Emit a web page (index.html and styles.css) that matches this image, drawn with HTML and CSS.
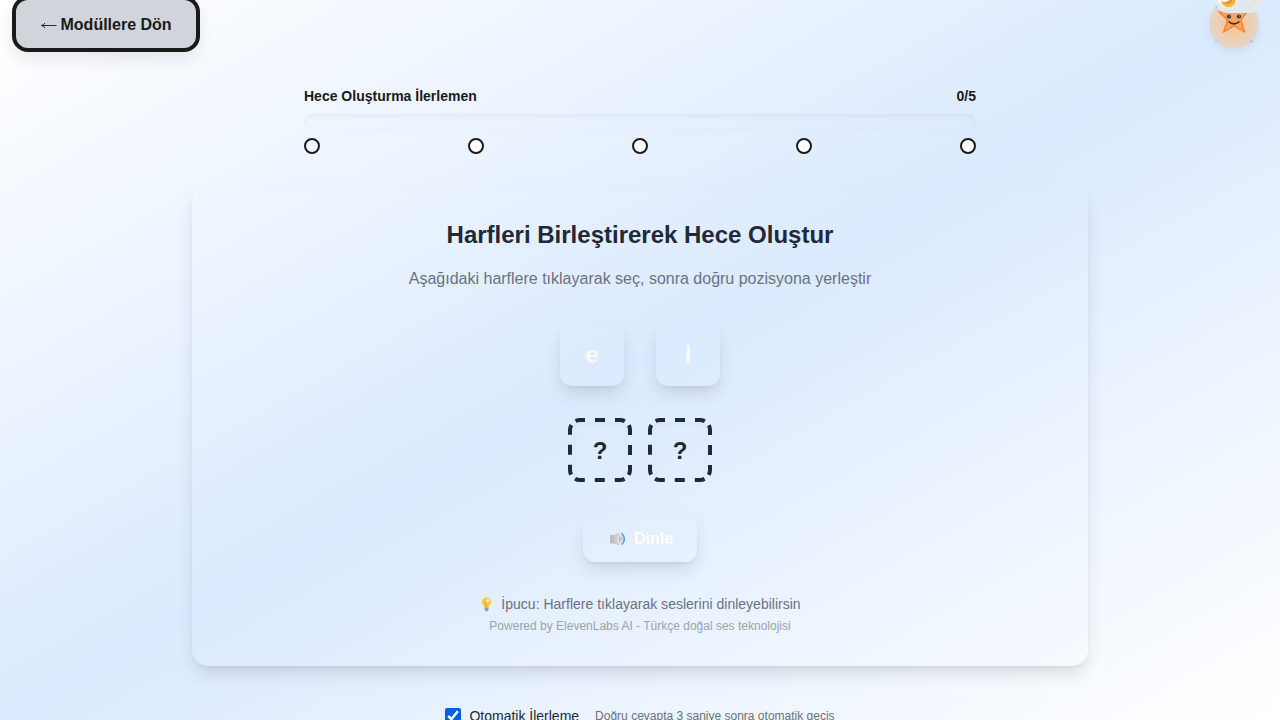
FILE: index.html
```html
<!DOCTYPE html>
<html lang="tr">
<head>
<meta charset="utf-8">
<title>Hece Oluşturma</title>
<link rel="stylesheet" href="styles.css">
</head>
<body>
<button class="back">
  <svg width="17" height="10" viewBox="0 0 17 10"><path d="M16.500 5.500H2M5 3Q4 5 1.500 5.500 4 6 5 8" fill="none" stroke="#1a1a1a" stroke-width=".9"/></svg>
  <span>Modüllere Dön</span>
</button>
<div class="mascot">
  <svg width="50" height="50" viewBox="0 0 50 50">
    <path d="M25 1l4 11.500 9 .5-6 8 3.500 12L25 27 14.500 33l4-12L10 13l11-.5z" fill="#ffa35c" stroke="#ff7a2c" stroke-width="1.200"/>
    <circle cx="20" cy="17.500" r="2.100" fill="#2c3440"/><circle cx="30" cy="17.500" r="2.100" fill="#2c3440"/>
    <circle cx="20.500" cy="16.900" r=".5" fill="#fff"/><circle cx="30.500" cy="16.900" r=".5" fill="#fff"/>
    <path d="M19.500 22.500q5.500 4.600 11 0" fill="none" stroke="#2c3440" stroke-width="1.600"/>
    <path d="M6 7.500h3M7.500 6v3M41 42.500h3M42.500 41v3" stroke="#77e6b4"/>
    <path d="M6 42.500h2M7 41.500v2" stroke="#8cd0f2"/>
  </svg>
</div>
<div class="toggle">
  <svg width="48" height="14" viewBox="0 0 48 14">
    <circle cx="13" cy="-2" r="10" fill="#fff"/>
    <path d="M19-5A7.500 7.500 0 1 1 6 1Q14 4 19-5z" fill="#f5b942"/>
    <path d="M17-3Q15 2 8 3 15 6.500 18 0z" fill="#e99232"/>
    <path d="M39-5A7.500 7.500 0 0 1 28 4Q38 10 42 0 42-4 39-5z" fill="#f2e0c4"/>
  </svg>
</div>
<main class="page">
  <section class="progress">
    <div class="progress-head"><span>Hece Oluşturma İlerlemen</span><span>0/5</span></div>
    <div class="track"></div>
    <div class="dots"><i class="dot first"></i><i class="dot"></i><i class="dot"></i><i class="dot"></i><i class="dot"></i></div>
  </section>
  <section class="card">
    <h2 class="title">Harfleri Birleştirerek Hece Oluştur</h2>
    <p class="lead">Aşağıdaki harflere tıklayarak seç, sonra doğru pozisyona yerleştir</p>
    <div class="letters"><button class="letter">e</button><button class="letter">l</button></div>
    <div class="slots">
      <div class="slot"><svg class="dashes" width="64" height="64" viewBox="0 0 64 64"><rect x="2" y="2" width="60" height="60" rx="10" fill="none" stroke="#1f2937" stroke-width="4" stroke-dasharray="10 10 10 10 10 5.708" stroke-dashoffset="5"/></svg><span class="mark">?</span></div>
      <div class="slot"><svg class="dashes" width="64" height="64" viewBox="0 0 64 64"><rect x="2" y="2" width="60" height="60" rx="10" fill="none" stroke="#1f2937" stroke-width="4" stroke-dasharray="10 10 10 10 10 5.708" stroke-dashoffset="5"/></svg><span class="mark">?</span></div>
    </div>
    <button class="listen">
      <svg class="speaker" width="18" height="16" viewBox="0 0 18 16">
        <path d="M1 4h5v8.500H1z" fill="#c0b8c2"/><path d="M4.500 4.200L10 1.500v13L4.500 12.300z" fill="#d0c8d0"/><ellipse cx="10" cy="8" rx="2" ry="6.600" fill="#ded7e0"/><ellipse cx="10.700" cy="8" rx=".8" ry="2.300" fill="#bcb2c0"/>
        <path d="M12.300 5.500q1.500 2.500 0 5" fill="none" stroke="#8cc6f7"/><path d="M12.600 2.200q5.500 5.800 0 11.600" fill="none" stroke="#459cf0" stroke-width="1.500"/>
      </svg>
      <span>Dinle</span>
    </button>
    <p class="hint">
      <svg width="14" height="15" viewBox="0 0 14 15">
        <path d="M7.500.5a4.800 4.800 0 0 1 4.800 4.600c0 2.400-2.500 3-2.800 5.400h-4C5.200 8.100 2.700 7.500 2.700 5.100A4.800 4.800 0 0 1 7.500.5z" fill="#fdc545"/>
        <circle cx="8.800" cy="3.500" r="1.700" fill="#fff2b0"/><path d="M6.500 5l1 5.500" stroke="#f39a3d"/>
        <path d="M5.500 10.500h4v2.300l-1 1.500h-2l-1-1.500z" fill="#a791ab"/>
      </svg>
      <span>İpucu: Harflere tıklayarak seslerini dinleyebilirsin</span>
    </p>
    <p class="powered">Powered by ElevenLabs AI - Türkçe doğal ses teknolojisi</p>
  </section>
  <label class="auto"><input class="check" type="checkbox" checked><span class="auto-name">Otomatik İlerleme</span><span class="auto-note">Doğru cevapta 3 saniye sonra otomatik geçiş</span></label>
</main>
</body>
</html>
```
FILE: styles.css
```css
* { box-sizing: border-box; margin: 0; padding: 0; }
body {
  height: 720px; overflow: hidden;
  font-family: "Liberation Sans", Arial, sans-serif; color: #1a1a1a;
  background: linear-gradient(to bottom right, #fff, #dbeafe, #fff);
}
button { font-family: inherit; border: 0; }
.back {
  position: absolute; left: 12px; top: -4px; width: 188px; height: 56px;
  display: flex; align-items: center; gap: 4px; padding: 2px 0 0 23.500px;
  border: 4px solid #1a1a1a; border-radius: 16px; background: #d1d5db; color: #1a1a1a;
  font-size: 16px; font-weight: 700; line-height: 24px;
  box-shadow: 0 8px 16px rgba(0,0,0,.08);
}
.mascot {
  position: absolute; left: 1209px; top: -1px; width: 50px; height: 50px; border-radius: 50%;
  background: radial-gradient(circle, #f9c591 0%, #efceb0 45%, #e0d6d0 70%);
  box-shadow: 0 3px 8px rgba(80,100,140,.1);
}
.toggle {
  position: absolute; left: 1215px; top: 0; width: 48px; height: 13px; overflow: hidden;
  border-radius: 0 0 14px 14px; background: #e3e8f0;
}
.mascot svg, .toggle svg { display: block; }
.page { display: flex; flex-direction: column; align-items: center; padding-top: 86px; }
.progress { width: 672px; }
.progress-head { display: flex; justify-content: space-between; font-size: 14px; font-weight: 700; line-height: 20px; }
.track { height: 16px; margin-top: 8px; border-radius: 8px; box-shadow: inset 0 2px 6px rgba(0,0,0,.06); }
.dots { display: flex; justify-content: space-between; margin-top: 8px; }
.dot { width: 16px; height: 16px; border: 2px solid #1a1a1a; border-radius: 50%; background: #fff; }
.first { background: transparent; }
.card {
  width: 896px; height: 480px; margin-top: 32px; padding: 33px 32px 31px;
  display: flex; flex-direction: column; align-items: center; border-radius: 16px;
  box-shadow: 0 10px 17px -1px rgba(0,0,0,.1), 0 4px 6px -4px rgba(0,0,0,.1);
}
.title { font-size: 24px; line-height: 32px; color: #1f2937; }
.lead { margin-top: 16px; font-size: 16px; line-height: 24px; color: #6b7280; }
.letters { display: flex; gap: 32px; margin-top: 31px; }
.letter {
  width: 64px; height: 64px; padding-top: 2px; border-radius: 12px; background: transparent;
  color: #f8fafc; font-size: 24px; font-weight: 700;
  box-shadow: 0 9px 17px -1px rgba(0,0,0,.1), 0 4px 6px -4px rgba(0,0,0,.1);
}
.slots { display: flex; gap: 16px; margin-top: 32px; }
.slot {
  position: relative; width: 64px; height: 64px; padding: 4px;
  color: #1f2937; font-size: 24px; font-weight: 700;
}
.dashes { position: absolute; inset: 0; }
.mark {
  display: flex; align-items: center; justify-content: center;
  height: 56px; padding-top: 2px; border-radius: 8px;
  box-shadow: inset 0 2px 6px rgba(0,0,0,.04);
}
.listen {
  display: flex; align-items: center; gap: 7px; width: 114px; height: 48px; margin-top: 32px; padding: 2px 0 0 26px;
  border-radius: 12px; background: transparent; color: #fff; font-size: 16px; font-weight: 700;
  box-shadow: 0 9px 17px -1px rgba(0,0,0,.1), 0 4px 6px -4px rgba(0,0,0,.1);
}
.speaker { margin-bottom: 1px; }
.hint { display: flex; align-items: center; gap: 8px; margin-top: 32px; font-size: 14px; line-height: 20px; color: #6b7280; }
.hint span { letter-spacing: .01px; }
.powered { margin-top: 4px; font-size: 12px; line-height: 16px; color: #9ca3af; }
.auto { display: flex; align-items: center; height: 20px; margin-top: 40px; }
.check { width: 16px; height: 16px; margin-right: 8px; accent-color: #0060df; }
.auto-name { font-size: 14px; line-height: 20px; color: #1f2937; }
.auto-note { margin-left: 16px; font-size: 12px; line-height: 16px; color: #6b7280; }
```
